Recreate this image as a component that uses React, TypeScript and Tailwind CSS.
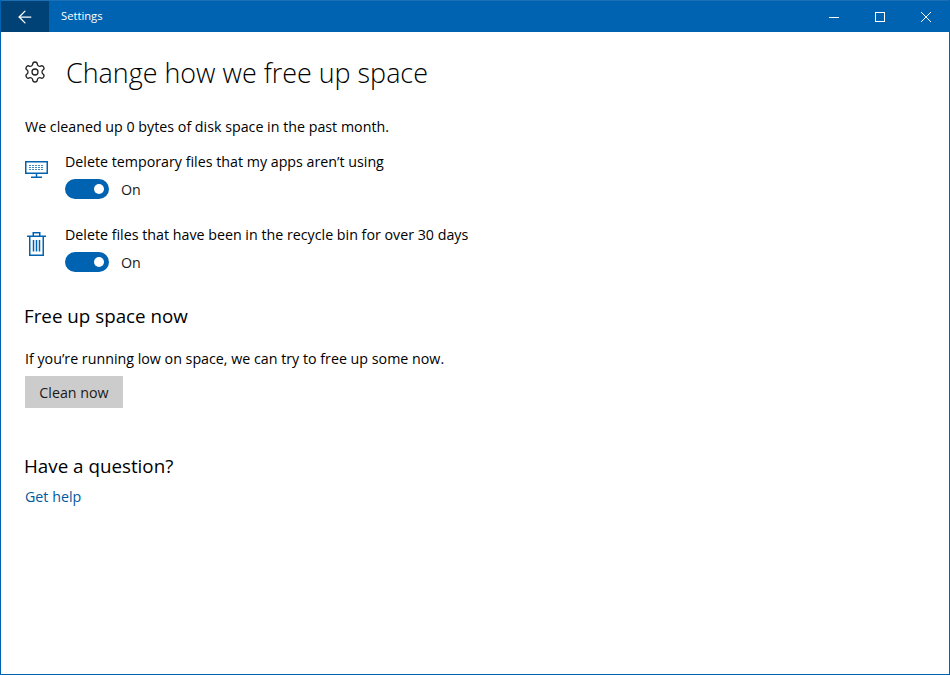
import { ArrowLeft, Settings } from 'lucide-react'

const font = { fontFamily: '"Open Sans", "Noto Sans", sans-serif' }

function Toggle() {
  return (
    <div className="flex h-[20px] w-[44px] items-center justify-end rounded-full bg-[#0063b1] pr-[5px]">
      <span className="size-[10px] rounded-full bg-white" />
    </div>
  )
}

function KeyboardIcon() {
  return (
    <svg width="23" height="17" viewBox="0 0 23 17" fill="none" stroke="#0063b1" className="block">
      <rect x="0.75" y="0.75" width="21.5" height="11.5" strokeWidth="1.5" />
      <path d="M11.5 13v3M6 16.25h11" strokeWidth="1.5" />
      <path d="M4 4.5h15M4 6.5h15M4 8.5h15" strokeWidth="1" strokeDasharray="2 1" strokeOpacity="0.75" />
    </svg>
  )
}

function TrashIcon() {
  return (
    <svg width="19" height="24" viewBox="0 0 19 24" fill="none" stroke="#0063b1" strokeWidth="1.5" className="block">
      <path d="M0 4.25h19M6.25 4V0.75h6.5V4M2.75 4.5V23.25h13.5V4.5" />
      <path d="M6.5 8v11.5M9.5 8v11.5M12.5 8v11.5" />
    </svg>
  )
}

function StorageRow({ icon, label, iconClass }: { icon: React.ReactNode; label: string; iconClass: string }) {
  return (
    <div className="flex">
      <div className={`w-[40px] ${iconClass}`}>{icon}</div>
      <div>
        <p className="h-[20px] text-[14.25px] leading-[20px] text-black">{label}</p>
        <div className="mt-[7px] flex items-center gap-[12px]">
          <Toggle />
          <span className="h-[20px] text-[14.25px] leading-[22px] text-[#1a1a1a]">On</span>
        </div>
      </div>
    </div>
  )
}

export default function App() {
  return (
    <div style={font} className="flex h-[675px] w-[950px] flex-col border border-t-0 border-[#0063b1] bg-white">
      <header className="flex h-[32px] shrink-0 items-center border-t border-[#1a6fb5] bg-[#0063b1] text-white">
        <button className="flex h-full w-[48px] items-center justify-center bg-[#004275]" type="button">
          <ArrowLeft size={20} strokeWidth={1.5} />
        </button>
        <span className="ml-[12px] text-[11.2px]">Settings</span>
        <div className="ml-auto flex h-full">
          <span className="flex w-[46px] items-center justify-center">
            <svg width="10" height="10" viewBox="0 0 10 10" stroke="white" fill="none"><path d="M0 5.5h10" /></svg>
          </span>
          <span className="flex w-[46px] items-center justify-center">
            <svg width="10" height="10" viewBox="0 0 10 10" stroke="white" fill="none"><rect x="0.5" y="0.5" width="9" height="9" /></svg>
          </span>
          <span className="flex w-[46px] items-center justify-center">
            <svg width="10" height="10" viewBox="0 0 10 10" stroke="white" fill="none"><path d="M0 0l10 10M10 0L0 10" /></svg>
          </span>
        </div>
      </header>

      <main className="flex-1 pl-[24px]">
        <div className="mt-[24px] flex h-[34px] items-center">
          <Settings size={24} strokeWidth={1.3} className="-ml-[2px] mb-[2px] text-[#222]" />
          <h1 className="ml-[19px] text-[26.9px] font-light leading-[34px] text-black">Change how we free up space</h1>
        </div>
        <p className="mt-[27px] text-[14.25px] leading-[20px] text-black">We cleaned up 0 bytes of disk space in the past month.</p>
        <div className="mt-[15px]">
          <StorageRow icon={<KeyboardIcon />} iconClass="pt-[9px]" label="Delete temporary files that my apps aren’t using" />
        </div>
        <div className="mt-[26px]">
          <StorageRow icon={<TrashIcon />} iconClass="pl-[2px] pt-[7px]" label="Delete files that have been in the recycle bin for over 30 days" />
        </div>
        <h2 className="-ml-[1px] mt-[31px] text-[18.8px] leading-[26px] text-black">Free up space now</h2>
        <p className="mt-[20px] text-[14.25px] leading-[20px] text-black">If you’re running low on space, we can try to free up some now.</p>
        <button className="mt-[7px] block h-[32px] w-[98px] bg-[#cccccc] pt-[1px] text-[14.25px] text-[#1a1a1a]" type="button">Clean now</button>
        <h2 className="-ml-[1px] mt-[45px] text-[18.8px] leading-[26px] text-black">Have a question?</h2>
        <a className="mt-[8px] block text-[14.25px] leading-[20px] text-[#005a9e]">Get help</a>
      </main>
    </div>
  )
}
